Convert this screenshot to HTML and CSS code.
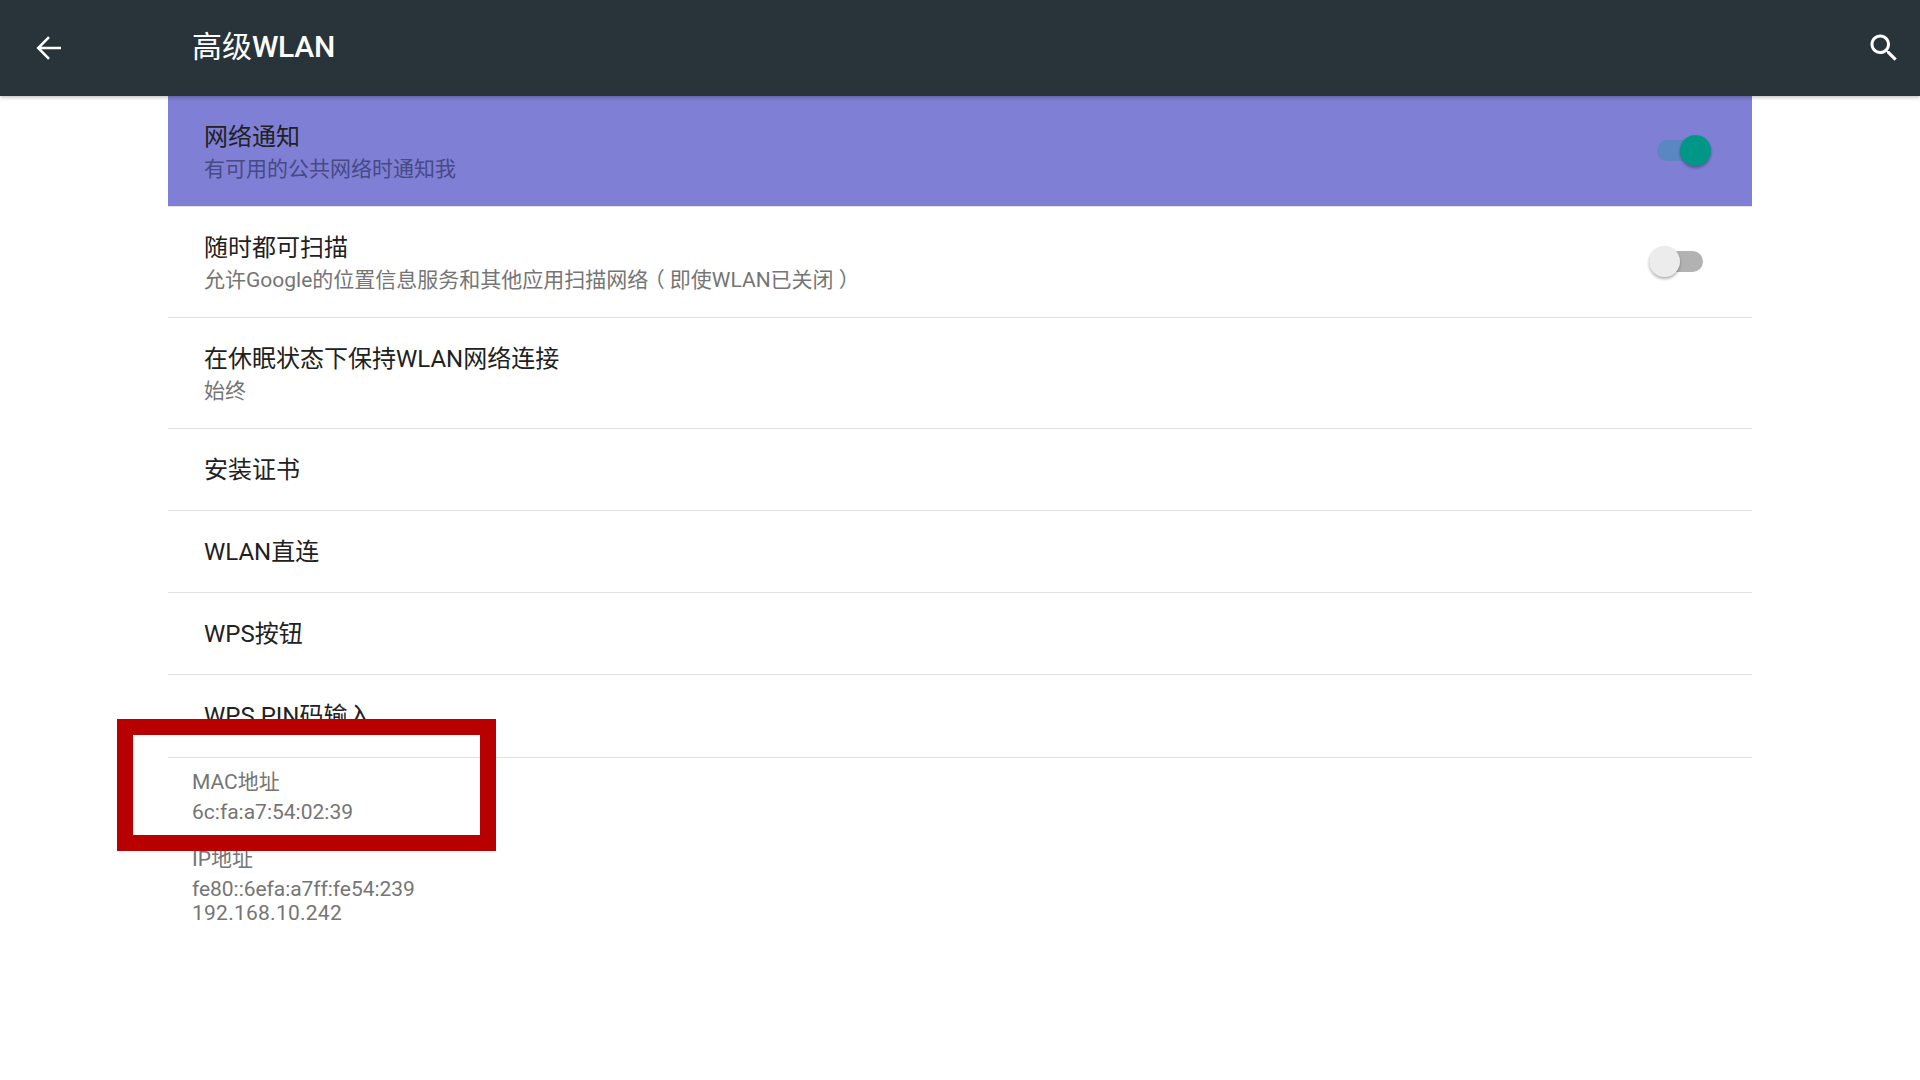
FILE: index.html
```html
<!DOCTYPE html>
<html lang="zh">
<head>
<meta charset="utf-8">
<title>高级WLAN</title>
<link rel="stylesheet" href="styles.css">
</head>
<body>
<header class="appbar">
  <svg class="icon back" viewBox="0 0 24 24" width="36" height="36"><path class="back-stroke" d="M20 12H4.8M12 4.8 4.8 12l7.2 7.2"/></svg>
  <h1 class="appbar-title">高级<span class="latin">WLAN</span></h1>
  <svg class="icon search" viewBox="0 0 24 24" width="36" height="36"><path d="M15.5 14h-.79l-.28-.27C15.41 12.59 16 11.11 16 9.5 16 5.91 13.09 3 9.5 3S3 5.91 3 9.5 5.91 16 9.5 16c1.61 0 3.09-.59 4.23-1.57l.27.28v.79l5 4.99L20.49 19l-4.99-5zm-6 0C7.01 14 5 11.99 5 9.5S7.01 5 9.5 5 14 7.01 14 9.5 11.99 14 9.5 14z"/></svg>
</header>
<main class="list">
  <section class="row row-two row-active">
    <div class="row-text">
      <div class="row-title">网络通知</div>
      <div class="row-sub">有可用的公共网络时通知我</div>
    </div>
    <div class="switch switch-on"><span class="track"></span><span class="thumb"></span></div>
  </section>
  <section class="row row-two">
    <div class="row-text">
      <div class="row-title">随时都可扫描</div>
      <div class="row-sub">允许Google的位置信息服务和其他应用扫描网络<span class="paren paren-open">（</span>即使WLAN已关闭<span class="paren paren-close">）</span></div>
    </div>
    <div class="switch switch-off"><span class="track"></span><span class="thumb"></span></div>
  </section>
  <section class="row row-two">
    <div class="row-text">
      <div class="row-title">在休眠状态下保持WLAN网络连接</div>
      <div class="row-sub">始终</div>
    </div>
  </section>
  <section class="row row-one"><div class="row-title">安装证书</div></section>
  <section class="row row-one"><div class="row-title">WLAN直连</div></section>
  <section class="row row-one"><div class="row-title">WPS按钮</div></section>
  <section class="row row-one row-last"><div class="row-title">WPS PIN码输入</div></section>
</main>
<footer class="info">
  <div class="info-block info-mac">
    <div>MAC地址</div>
    <div class="info-value">6c:fa:a7:54:02:39</div>
  </div>
  <div class="info-block info-ip">
    <div>IP地址</div>
    <div class="info-value info-v6">fe80::6efa:a7ff:fe54:239</div>
    <div class="info-line">192.168.10.242</div>
  </div>
</footer>
<div class="highlight"></div>
</body>
</html>
```
FILE: styles.css
```css
html, body { margin: 0; padding: 0; }
body {
  width: 1920px;
  height: 1080px;
  overflow: hidden;
  position: relative;
  background: #fff;
  font-family: Roboto, "Noto Sans CJK SC", sans-serif;
}
.appbar {
  position: relative;
  z-index: 2;
  height: 96px;
  background: #29333a;
  display: flex;
  align-items: center;
  box-shadow: 0 1px 4px rgba(0, 0, 0, .3);
}
.icon { fill: #fff; flex: none; }
.back { margin-left: 31px; }
.back-stroke { fill: none; stroke: #fff; stroke-width: 1.7; }
.appbar-title {
  margin: 0 0 8px 125px;
  flex: 1;
  font-size: 30px;
  font-weight: 400;
  color: #fff;
}
.latin { font-weight: 500; letter-spacing: -.3px; }
.search { margin-right: 18px; }
.list { margin: 0 168px; }
.row {
  box-sizing: border-box;
  display: flex;
  align-items: center;
  justify-content: space-between;
  padding-left: 36px;
  border-bottom: 1px solid #e0e0e0;
  position: relative;
}
.row-two { height: 111px; padding-top: 3px; }
.row-one { height: 82px; }
.row-last { height: 83px; }
.row-active { background: #7f7fd5; }
.row-title { font-size: 24px; line-height: 32px; color: #212121; }
.row-sub { font-size: 21px; line-height: 30px; margin-top: 1px; color: #757575; }
.row-active .row-sub { color: #474a85; }
.paren { font-feature-settings: "halt"; }
.paren-open { padding: 0 5px 0 6px; }
.paren-close { padding-left: 5px; }
.switch { position: absolute; top: 50%; width: 63px; height: 31px; margin-top: -16px; }
.switch-on { left: 1489px; }
.switch-off { left: 1481px; }
.track {
  position: absolute;
  top: 5px;
  height: 21px;
  border-radius: 11px;
}
.thumb {
  position: absolute;
  top: 0;
  width: 31px;
  height: 31px;
  border-radius: 50%;
  box-shadow: 0 2px 3px rgba(0, 0, 0, .3);
}
.switch-on .track { left: 0; width: 54px; background: #5a87c2; }
.switch-on .thumb { left: 23px; background: #009688; }
.switch-off .track { left: 0; width: 54px; background: #b2b2b2; }
.switch-off .thumb { left: 0; background: #ececec; }
.info {
  padding: 8px 0 0 192px;
  font-size: 21px;
  color: #757575;
}
.info-block div { line-height: 30px; }
.info-block { padding-top: 1px; }
.info-ip { margin-top: 16px; }
.info-v6 { letter-spacing: -.05px; }
.info-block .info-line { line-height: 24px; margin-top: -3px; letter-spacing: .25px; }
.highlight {
  position: absolute;
  z-index: 3;
  left: 117px;
  top: 719px;
  width: 347px;
  height: 100px;
  border: 16px solid #b90000;
}
```
